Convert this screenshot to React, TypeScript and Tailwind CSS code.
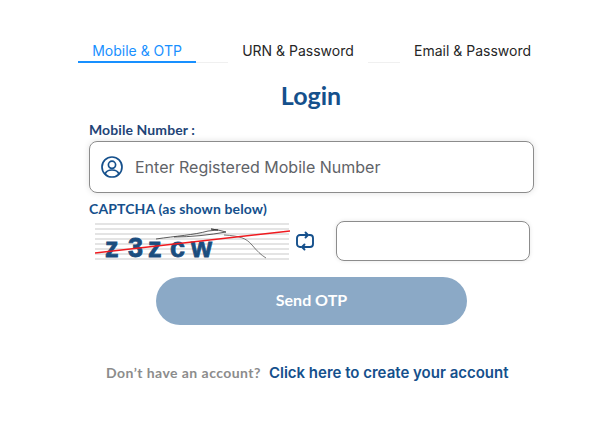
export default function App() {
  const heading = "font-['Lato','Liberation_Sans',sans-serif]";
  const gapLine = <div className="h-px w-8 self-end bg-[#f0f0f0]" />;
  return (
    <div className="w-[615px] h-[438px] bg-white overflow-hidden font-['Inter',sans-serif]">
      <div className="flex pt-[41px] pl-[78px] h-[63px]">
        <div className="w-[118px] h-[22px] text-center text-[14px] leading-[20px] text-[#1890ff] border-b-2 border-[#1890ff]">Mobile &amp; OTP</div>
        {gapLine}
        <div className="w-[140px] h-[22px] text-center text-[14px] leading-[20px] text-[#262626]">URN &amp; Password</div>
        {gapLine}
        <div className="w-[145px] h-[22px] text-center text-[14px] leading-[20px] text-[#262626]">Email &amp; Password</div>
      </div>
      <h1 className={`${heading} mt-[16px] pl-[7px] text-center text-[25px] leading-[32px] font-bold text-[#15508c]`}>Login</h1>
      <div className="pl-[89px] mt-[9px]">
        <label className={`${heading} block text-[14px] tracking-[0.1px] leading-[20px] font-bold text-[#1f4477]`}>Mobile Number :</label>
        <div className="mt-[1px] flex items-center w-[445px] h-[52px] rounded-[8px] border border-[#8c8c8c] shadow-[0_0_6px_rgba(0,0,0,0.12)] pl-[11px]">
          <svg width="24" height="24" viewBox="0 0 24 24" fill="none" stroke="#15508c" strokeWidth="1.7" className="-ml-[1px]">
            <circle cx="12" cy="12" r="10" />
            <circle cx="12" cy="9.8" r="3.6" />
            <path d="M5.2 19c.8-2.8 3.2-4 6.8-4s6 1.2 6.8 4" />
          </svg>
          <span className="ml-[11px] text-[16px] text-[#5f6368]">Enter Registered Mobile Number</span>
        </div>
        <label className={`${heading} block mt-[6px] text-[14px] tracking-[0.13px] leading-[20px] font-bold text-[#15508c]`}>CAPTCHA (as shown below)</label>
        <div className="flex items-start mt-[2px]">
          <svg width="196" height="40" viewBox="0 0 196 40" className="ml-[5px] mt-[2px]">
            {[1, 6, 11, 16, 21, 26, 31, 36].map((y) => (
              <line key={y} x1="1" x2="195" y1={y} y2={y} stroke="#c9c9c9" strokeWidth="1" />
            ))}
            <text x="11 34 54 76 97" y="34" fontFamily="'Liberation Sans',sans-serif" fontWeight="700" fontSize="27" fill="#1b4d7e" stroke="#1b4d7e" strokeWidth="0.8">z3zcw</text>
            <path d="M62 16c20-3 38-4 52-8l10-1-7-1 7 1 8 2c-16 3-36 5-52 5" fill="none" stroke="#333" strokeWidth="0.8" />
            <path d="M130 12c16 1 22 3 28 10 5 6 9 10 14 13" fill="none" stroke="#444" strokeWidth="0.7" />
            <line x1="1" y1="30" x2="196" y2="8" stroke="#f01a1f" strokeWidth="1.5" />
          </svg>
          <svg width="20" height="20" viewBox="0 0 20 20" fill="none" stroke="#15508c" strokeWidth="1.9" strokeLinecap="round" strokeLinejoin="round" className="ml-[5px] mt-[10px]">
            <path d="M6 16H5a3 3 0 0 1-3-3V7a3 3 0 0 1 3-3h7" />
            <path d="M10.5 1.5L13 4l-2.5 2.5" />
            <path d="M14 4h1a3 3 0 0 1 3 3v6a3 3 0 0 1-3 3H8" />
            <path d="M9.5 13.5L7 16l2.5 2.5" />
          </svg>
          <div className="ml-[21px] w-[194px] h-[40px] rounded-[8px] border border-[#8c8c8c] shadow-[0_0_4px_rgba(0,0,0,0.1)]" />
        </div>
      </div>
      <button className={`${heading} block ml-[156px] mt-[14px] w-[311px] h-[48px] pb-[2px] rounded-full bg-[#8ba9c6] text-white text-[16px] font-bold`}>Send OTP</button>
      <div className="flex items-baseline mt-[37px] pl-[106px]">
        <span className={`${heading} text-[14px] tracking-[0.45px] font-bold text-[#8c8c8c]`}>Don’t have an account?</span>
        <a className="ml-[8px] text-[15px] font-semibold text-[#15508c]">Click here to create your account</a>
      </div>
    </div>
  );
}
